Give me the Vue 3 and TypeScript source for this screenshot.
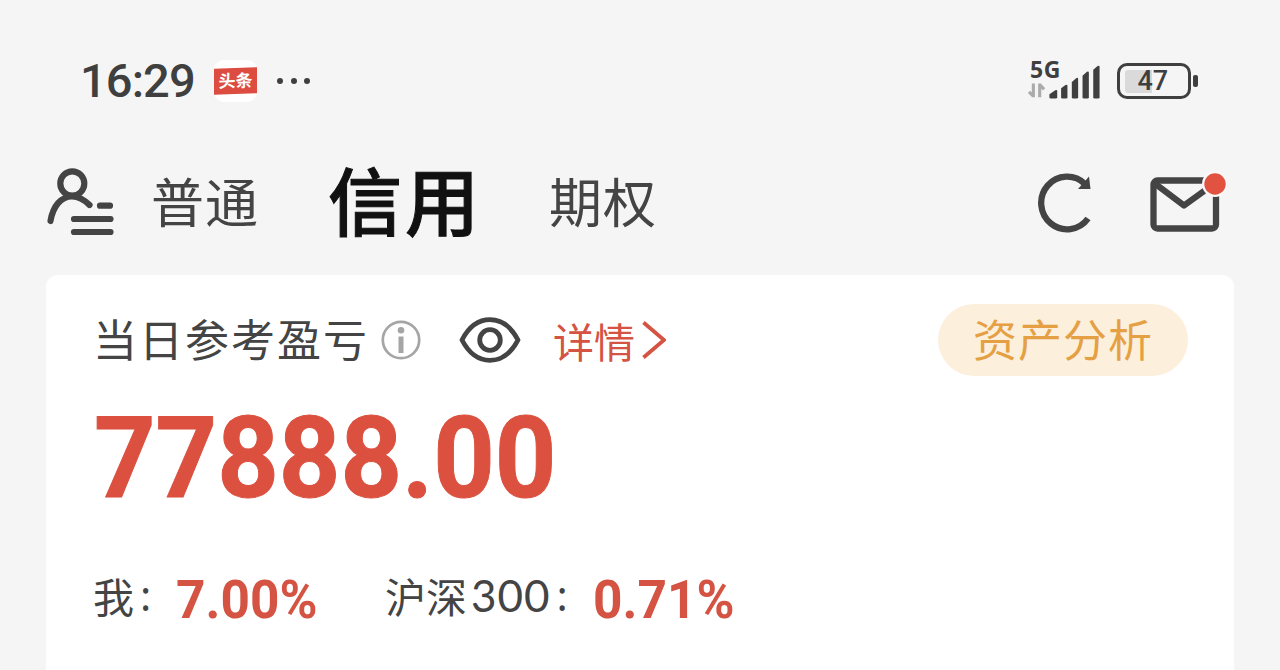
<script setup lang="ts">
interface Tab {
  label: string
  active: boolean
}

interface Stat {
  name: string
  digits: string
  value: string
  kind: string
}

const tabs: Tab[] = [
  { label: '普通', active: false },
  { label: '信用', active: true },
  { label: '期权', active: false },
]

const stats: Stat[] = [
  { name: '我', digits: '', value: '7.00%', kind: 'mine' },
  { name: '沪深', digits: '300', value: '0.71%', kind: 'index' },
]
</script>

<template>
  <div class="page">
    <header class="status">
      <span class="time">16:29</span>
      <span class="app-badge"><span class="ribbon"><span class="ribbon-text">头条</span></span></span>
      <span class="dots"><i></i><i></i><i></i></span>
      <div class="spacer"></div>
      <div class="signal">
        <span class="net">5G</span>
        <svg width="76" height="38" viewBox="0 0 76 38">
          <path d="M5.500 19v14M5.500 32L1 27.500M12 33V19M12 20L16.500 25" fill="none" stroke="#ababab" stroke-width="3.2" />
          <g fill="#3f3f3f">
            <path d="M22 30l6-4q2-1 2 1V33q0 1.500-1.500 1.500h-5Q22 34.500 22 33z" />
            <path d="M34 24l4.500-3.500q2-1 2 1V33q0 1.500-1.500 1.500h-3.500Q34 34.500 34 33z" />
            <path d="M45 17.500l4.500-4q2-1 2 1V33q0 1.500-1.500 1.500h-3.500Q45 34.500 45 33z" />
            <path d="M56 11l4.500-4q2-1 2 1V33q0 1.500-1.500 1.500h-3.500Q56 34.500 56 33z" />
            <path d="M67 5l4.500-4q2-1 2 1V33q0 1.500-1.500 1.500h-3.500Q67 34.500 67 33z" />
          </g>
        </svg>
      </div>
      <div class="battery"><span class="level">47</span></div>
      <span class="battery-cap"></span>
    </header>

    <nav class="nav">
      <svg class="account" width="68" height="70" viewBox="0 0 68 70" fill="none" stroke="#444" stroke-width="6.2" stroke-linecap="round">
        <ellipse cx="25.300" cy="16.500" rx="12" ry="12.200" />
        <path d="M3.500 54C6 39 14 29.500 25 29.500c7 0 12.500 3.500 17.500 8.500" />
        <path d="M53 38.700h10M27 52H63.500M27 65H63.500" />
      </svg>
      <div class="tabs">
        <span v-for="tab in tabs" :key="tab.label" class="tab" :class="{ active: tab.active }">{{ tab.label }}</span>
      </div>
      <div class="spacer"></div>
      <svg class="refresh" width="56" height="62" viewBox="0 0 56 62">
        <path d="M51 47.500A25.900 26.300 0 1 1 48 13" fill="none" stroke="#444" stroke-width="6.300" />
        <path d="M52 5.500l1.500 12.500H41z" fill="#444" />
      </svg>
      <svg class="mail" width="78" height="62" viewBox="0 0 78 62">
        <g fill="none" stroke="#444" stroke-width="6.300">
          <rect x="4.500" y="9.500" width="62.500" height="48" rx="4" />
          <path d="M6.500 13L35 34.500L62 15" stroke-linejoin="round" />
        </g>
        <circle cx="66" cy="13" r="13" fill="#faf8f7" />
        <circle cx="66" cy="13" r="10.700" fill="#e15241" />
      </svg>
    </nav>

    <main class="card">
      <section class="heading">
        <span class="title">当日参考盈亏</span>
        <svg class="info" width="40" height="40" viewBox="0 0 40 40">
          <circle cx="20" cy="20" r="18.200" fill="none" stroke="#a5a5a5" stroke-width="2.700" />
          <circle cx="20" cy="10.200" r="3.300" fill="#a5a5a5" />
          <path d="M20 16.500V33" stroke="#a5a5a5" stroke-width="5" />
        </svg>
        <svg class="eye" width="62" height="48" viewBox="0 0 62 48" fill="none" stroke="#444" stroke-width="4.800">
          <path d="M3 24C10 10.500 19 3.700 31 3.700S52 10.500 59 24C52 37.500 43 44.300 31 44.300S10 37.500 3 24z" stroke-linejoin="round" />
          <circle cx="31" cy="24" r="10.300" />
        </svg>
        <a class="detail">详情</a>
        <svg class="chevron" width="24" height="38" viewBox="0 0 24 38">
          <path d="M1.500 1.500L22 19L1.500 36.500" fill="none" stroke="#d45343" stroke-width="3.800" />
        </svg>
        <div class="spacer"></div>
        <button class="analysis"><span>资产分析</span></button>
      </section>

      <div class="amount">77888.00</div>

      <section class="stats">
        <div v-for="stat in stats" :key="stat.name" class="stat" :class="stat.kind">
          <span class="name">{{ stat.name }}</span>
          <span v-if="stat.digits" class="digits">{{ stat.digits }}</span>
          <span class="colon">:</span>
          <span class="value">{{ stat.value }}</span>
        </div>
      </section>
    </main>
  </div>
</template>

<style>
html,
body {
  overflow: hidden;
  background: #f5f5f5;
}
</style>

<style scoped>
.page {
  width: 1280px;
  height: 670px;
  box-sizing: border-box;
  padding-top: 41px;
  overflow: hidden;
  background: #f5f5f5;
  color: #444;
  font-family: "Noto Sans CJK SC", sans-serif;
  white-space: nowrap;
}

.spacer {
  flex: 1;
}

.status {
  display: flex;
  align-items: center;
  height: 80px;
  padding-left: 80px;
  color: #3f3f3f;
}

.time {
  width: 134px;
  font: 500 47px/60px Roboto, sans-serif;
  letter-spacing: -0.900px;
}

.app-badge {
  display: flex;
  align-items: center;
  width: 43px;
  height: 42px;
  border-radius: 10px;
  background: #fff;
}

.ribbon {
  width: 43px;
  height: 26px;
  background: #dc4c40;
  color: #fff;
  text-align: center;
  transform: skewY(-2deg);
}

.ribbon-text {
  display: block;
  font-size: 17px;
  font-weight: 700;
  line-height: 24px;
}

.dots {
  display: flex;
  gap: 7.500px;
  margin-left: 20px;
}

.dots i {
  width: 6px;
  height: 6px;
  border-radius: 50%;
  background: #3f3f3f;
}

.signal {
  display: flex;
  flex-direction: column;
  width: 89.500px;
  height: 42px;
}

.net {
  height: 5px;
  padding-left: 3px;
  font: 700 23px/19px "Noto Sans", sans-serif;
  letter-spacing: 0.500px;
}

.battery {
  display: flex;
  align-items: center;
  box-sizing: border-box;
  width: 74px;
  height: 36px;
  padding-left: 5px;
  border: 3.500px solid #3f3f3f;
  border-radius: 10px;
}

.level {
  box-sizing: border-box;
  width: 60px;
  padding-left: 13px;
  border-radius: 3px;
  background: linear-gradient(90deg, #dadada 27px, transparent 27px);
  font: 500 27px/23px Roboto, sans-serif;
}

.battery-cap {
  width: 5px;
  height: 12px;
  margin: 0 82.500px 0 2px;
  border-radius: 2px;
  background: #3f3f3f;
}

.nav {
  display: flex;
  align-items: center;
  height: 154px;
  padding-left: 47px;
}

.account {
  margin: 8px 36px 0 0;
}

.tabs {
  display: flex;
  align-items: center;
}

.tab {
  padding-top: 3px;
  font-size: 53px;
  font-weight: 400;
  line-height: 80px;
  letter-spacing: 1px;
}

.tab.active {
  margin: 0 67px 0 69px;
  padding-top: 0;
  color: #111;
  font-size: 74px;
  font-weight: 500;
  letter-spacing: 3px;
  -webkit-text-stroke: 1px #111;
}

.refresh {
  margin: 8px 56px 0 0;
}

.mail {
  margin: 8px 53px 0 0;
}

.card {
  width: 1188px;
  height: 420px;
  box-sizing: border-box;
  margin: 0 46px;
  padding: 29px 46px 0 47px;
  border-radius: 12px 12px 0 0;
  background: #fff;
}

.heading {
  display: flex;
  align-items: center;
  height: 72px;
}

.title {
  width: 288px;
  padding-bottom: 4px;
  font-size: 44px;
  line-height: 64px;
  letter-spacing: 2px;
}

.eye {
  margin-left: 38px;
}

.detail {
  margin-left: 32px;
  padding-bottom: 1px;
  color: #d45343;
  font-size: 41px;
  line-height: 64px;
}

.chevron {
  margin-left: 7px;
}

.analysis {
  width: 250px;
  height: 72px;
  padding: 0 0 4px;
  border: 0;
  border-radius: 36px;
  background: #fcf0dd;
  color: #e5a044;
  font: 400 44px/64px "Noto Sans CJK SC", sans-serif;
  letter-spacing: 1px;
}

.amount {
  height: 120px;
  margin-top: 22px;
  padding-left: 1px;
  color: #dc503f;
  font: 700 114px/120px Roboto, sans-serif;
  -webkit-text-stroke: 1px #dc503f;
  letter-spacing: 0;
  transform: scaleX(0.942);
  transform-origin: left;
}

.stats {
  display: flex;
  height: 70px;
  margin-top: 42px;
}

.stat {
  display: flex;
  align-items: center;
}

.name {
  font-size: 41px;
  line-height: 70px;
}

.digits {
  margin-left: 4px;
  font: 400 44px/70px Lato, sans-serif;
  letter-spacing: 1px;
}

.colon {
  width: 36px;
  padding-left: 6px;
  font: 400 42px/70px "Noto Sans", sans-serif;
}

.value {
  padding-top: 10px;
  color: #d45343;
  font: 700 53px/70px Roboto, sans-serif;
  transform: scaleX(0.97);
  transform-origin: left;
}

.mine {
  width: 292px;
}
</style>
